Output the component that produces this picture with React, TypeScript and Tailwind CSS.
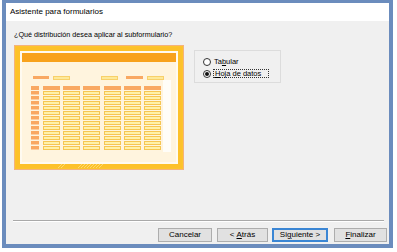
import React from 'react';

const font = { fontFamily: '"Liberation Sans", Arial, sans-serif' };

// Vista previa del formulario (dibujo)
const Preview: React.FC = () => {
    const cols = [43, 63, 83, 104, 124, 144];
    const rows = Array.from({ length: 12 }, (_, i) => 91 + i * 5);
    const ox = 14;
    const oy = 45;
    return (
        <svg width="170" height="125" viewBox={`${ox} ${oy} 170 125`} className="block shrink-0">
            <rect x="14.5" y="45.5" width="169" height="124" fill="#fcc52e" stroke="#f5b27a" />
            <rect x="16" y="47" width="166" height="121" fill="#fdc12a" />
            <rect x="20" y="51" width="158" height="113" fill="#fffaf0" />
            <rect x="22" y="53" width="154" height="109" fill="#fff4de" />
            <rect x="22" y="53" width="154" height="9" fill="#f8a21c" />
            <rect x="163" y="80" width="8" height="72" fill="#fffdf8" />
            {/* etiquetas */}
            <rect x="33" y="76" width="16" height="3" fill="#f9a862" />
            <rect x="53.5" y="76.5" width="16" height="3" fill="#fde99a" stroke="#f8d06a" />
            <rect x="101.5" y="76.5" width="16" height="3" fill="#fde99a" stroke="#f8d06a" />
            <rect x="126" y="76" width="17" height="3" fill="#f9a862" />
            <rect x="147.5" y="76.5" width="16" height="3" fill="#fde99a" stroke="#f8d06a" />
            {/* encabezado */}
            <rect x="31" y="86" width="8" height="4" fill="#f9a862" />
            {cols.map((x) => (
                <rect key={x} x={x} y="86" width="17" height="4" fill="#f9a862" />
            ))}
            {rows.map((y) => (
                <g key={y}>
                    <rect x="31" y={y} width="8" height="3.5" fill="#f9a862" />
                    {cols.map((x) => (
                        <rect key={x} x={x + 0.5} y={y + 0.5} width="16" height="3" fill="#fff1a8" stroke="#f6c653" />
                    ))}
                </g>
            ))}
            {/* agarradera */}
            {[58, 61, 78, 81, 84, 87, 90, 93, 96, 99].map((x) => (
                <line key={x} x1={x} y1="168" x2={x + 4} y2="164" stroke="#fcd870" strokeWidth="1" />
            ))}
        </svg>
    );
};

const Radio: React.FC<{ checked?: boolean }> = ({ checked }) => (
    <span className="w-[8px] h-[8px] rounded-full border border-[#333] bg-white flex items-center justify-center shrink-0">
        {checked && <span className="w-[4px] h-[4px] rounded-full bg-[#111]" />}
    </span>
);

const Btn: React.FC<{ className?: string; children: React.ReactNode }> = ({ className, children }) => (
    <div className={`h-[14px] flex items-center justify-center bg-[#e1e1e1] text-[8px] text-black ${className ?? ''}`}>
        {children}
    </div>
);

export default function App() {
    return (
        <div className="w-[397px] h-[252px] bg-white pl-[2px]" style={font}>
            <div className="w-[391px] h-[248px] flex flex-col border-x-4 border-b-4 border-t-[3px] border-[#6b8cbd]">
                <div className="h-[18px] bg-white flex items-center pl-[4px] text-[8px] text-black">
                    Asistente para formularios
                </div>
                <div className="flex-1 bg-[#f0f0f0] flex flex-col">
                    <div className="pt-[9px] pl-[8px] text-[7.2px] leading-[10px] text-black">
                        ¿Qué distribución desea aplicar al subformulario?
                    </div>
                    <div className="flex pl-[8px] mt-[5px]">
                        <Preview />
                        <div className="ml-[10px] mt-[5px] w-[87px] h-[33px] border border-[#dcdcdc] flex flex-col pl-[8px] pt-[7px] gap-[3px]">
                            <div className="flex items-center h-[8px] text-[7.5px] text-black">
                                <Radio />
                                <span className="ml-[3px]">Ta<span className="underline">b</span>ular</span>
                            </div>
                            <div className="flex items-center h-[9px] text-[7.5px] text-black">
                                <Radio checked />
                                <span className="ml-[2px] h-[9px] w-[56px] border border-dotted border-[#333] flex items-center pl-[1px] leading-none">
                                    <span className="underline">H</span>oja de datos
                                </span>
                            </div>
                        </div>
                    </div>
                    <div className="mt-auto ml-[7px] mr-[5px] border-t border-[#a9a9a9] border-b border-b-white" />
                    <div className="flex justify-end pr-[2px] mt-[6px] mb-[2px]">
                        <Btn className="w-[54px] border border-[#adadad]">Cancelar</Btn>
                        <Btn className="w-[51px] ml-[5px] border border-[#adadad]">
                            &lt; <span className="underline ml-[2px]">A</span>trás
                        </Btn>
                        <Btn className="w-[56px] ml-[4px] border-2 border-[#3b86d4]">
                            Si<span className="underline">g</span>uiente &gt;
                        </Btn>
                        <Btn className="w-[53px] ml-[6px] border border-[#adadad]">
                            <span className="underline">F</span>inalizar
                        </Btn>
                    </div>
                </div>
            </div>
        </div>
    );
}
